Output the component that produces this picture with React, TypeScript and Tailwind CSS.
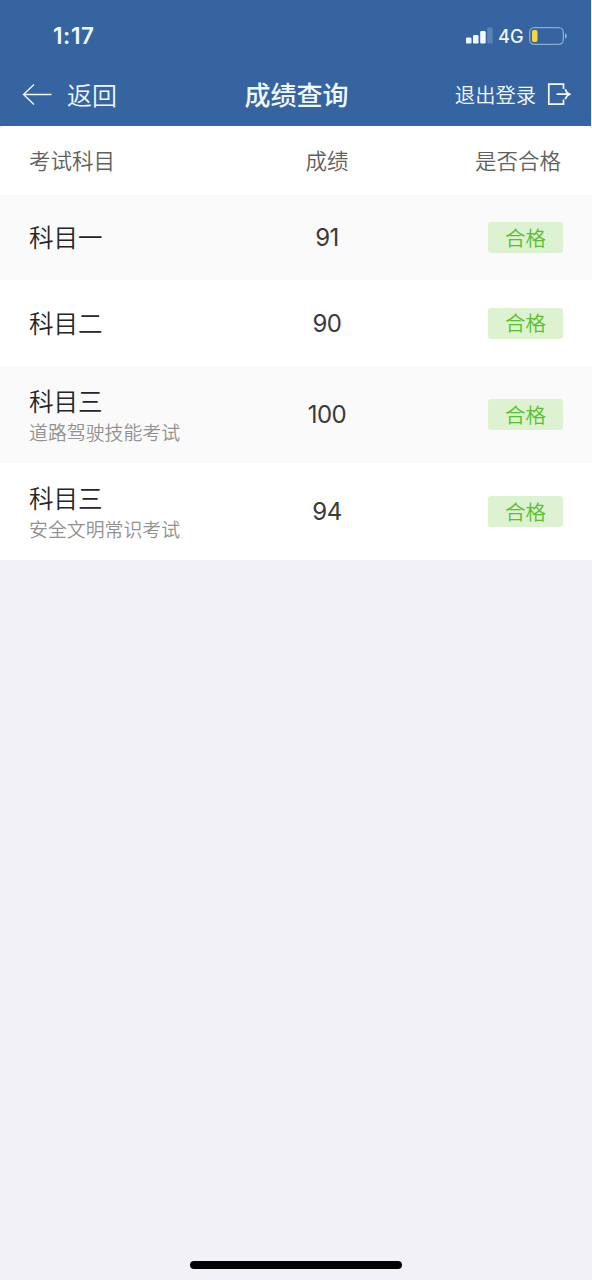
import clsx from 'clsx';

interface Subject {
  id: number;
  name: string;
  detail?: string;
  score: number;
  height: string;
}

const subjects: Subject[] = [
  { id: 1, name: '科目一', score: 91, height: 'h-[85px]' },
  { id: 2, name: '科目二', score: 90, height: 'h-[86px]' },
  {
    id: 3,
    name: '科目三',
    detail: '道路驾驶技能考试',
    score: 100,
    height: 'h-[97px]',
  },
  {
    id: 4,
    name: '科目三',
    detail: '安全文明常识考试',
    score: 94,
    height: 'h-[97px]',
  },
];

const StatusBar = () => (
  <div className="flex h-[63px] items-center justify-between pt-[9px] pr-[23px] pl-[53px]">
    <span className="text-[22.5px] leading-none font-semibold tracking-[0.6px]">
      1:17
    </span>
    <div className="flex items-center">
      <svg width="27" height="17" viewBox="0 0 27 17" fill="currentColor">
        <rect x="0" y="10.5" width="5.5" height="6" rx="1.2" />
        <rect x="7" y="8" width="5.5" height="8.5" rx="1.2" />
        <rect x="14.2" y="4" width="5.5" height="12.5" rx="1.2" />
        <rect x="21.2" y="0.5" width="5.5" height="16" rx="1.2" opacity="0.2" />
      </svg>
      <span className="ml-[5px] w-[26px] text-[18.2px] leading-none font-medium">
        4G
      </span>
      <svg
        className="ml-[5px]"
        width="39"
        height="18"
        viewBox="0 0 39 18"
        fill="none"
      >
        <rect
          x="0.7"
          y="0.7"
          width="33.6"
          height="16.6"
          rx="4.5"
          stroke="#fff"
          strokeOpacity="0.45"
          strokeWidth="1.3"
        />
        <rect x="3" y="3" width="5.5" height="12" rx="2" fill="#f5d93a" />
        <path d="M36 6.3c2.4.8 2.4 4.6 0 5.4z" fill="#fff" fillOpacity="0.5" />
      </svg>
    </div>
  </div>
);

const NavBar = () => (
  <div className="grid h-[63px] grid-cols-[1fr_auto_1fr] items-center pr-[20px] pl-[22px]">
    <div className="flex items-center">
      <svg
        width="30"
        height="22"
        viewBox="0 0 30 22"
        fill="none"
        stroke="currentColor"
        strokeWidth="1.4"
      >
        <path d="M12 0.5 1.5 10.5 12 20.5M1.5 10.5H29.5" />
      </svg>
      <span className="ml-[15px] pt-[3px] text-[25px] leading-none font-[350]">
        返回
      </span>
    </div>
    <h1 className="pt-[2px] text-[26px] leading-none font-medium">成绩查询</h1>
    <div className="flex items-center justify-end">
      <span className="pt-[3px] text-[20.3px] leading-none font-[350]">
        退出登录
      </span>
      <svg
        className="ml-[11px]"
        width="24"
        height="24"
        viewBox="0 0 24 24"
        fill="none"
        stroke="currentColor"
        strokeWidth="1.7"
      >
        <path d="M16.5 6V1.2H1.8v20h14.7v-4.8M9.5 11.2h13M18.3 6.2c.7 2.8 2.3 4.2 4.4 5-2.1.8-3.7 2.2-4.4 5" />
      </svg>
    </div>
  </div>
);

const ScoreTable = () => {
  const renderRows = () =>
    subjects.map((subject, index) => (
      <div
        key={subject.id}
        className={clsx(
          'flex items-center px-[29px]',
          subject.height,
          index % 2 === 0 ? 'bg-[#fafafa]' : 'bg-white',
        )}
      >
        <div className={clsx('w-[238px]', subject.detail ? 'pt-1' : 'pt-[2px]')}>
          <div className="text-[24.5px] leading-[33px] font-[350] text-[#262626]">
            {subject.name}
          </div>
          {subject.detail && (
            <div className="text-[18.9px] leading-[29px] font-[350] text-[#929292]">
              {subject.detail}
            </div>
          )}
        </div>
        <div className="w-[120px] pt-px text-center text-[24px] leading-none tracking-[-0.5px] text-[#3a3a3a]">
          {subject.score}
        </div>
        <span className="ml-auto flex h-[31px] w-[75px] items-center justify-center rounded-[3px] bg-[#dcf2d0] pt-[3px] text-[20.5px] leading-none font-[350] text-[#58c02c]">
          合格
        </span>
      </div>
    ));

  return (
    <div className="overflow-hidden rounded-t-[5px]">
      <div className="flex h-[69px] items-center bg-white pt-[2px] pr-[31px] pl-[29px] text-[21.5px] leading-none font-[350] text-[#606060]">
        <span className="w-[238px]">考试科目</span>
        <span className="w-[120px] text-center">成绩</span>
        <span className="ml-auto">是否合格</span>
      </div>
      {renderRows()}
    </div>
  );
};

const App = () => (
  <div className="flex h-[1280px] w-[592px] flex-col bg-[#f2f1f7] font-[Inter,'Noto_Sans_CJK_SC',sans-serif]">
    <header className="mr-px h-[126px] bg-[#3564a0] text-[#f1f8ff]">
      <StatusBar />
      <NavBar />
    </header>
    <ScoreTable />
    <div className="mt-auto mb-[11px] ml-[190px] h-[8px] w-[212px] rounded-full bg-black" />
  </div>
);

export default App;
